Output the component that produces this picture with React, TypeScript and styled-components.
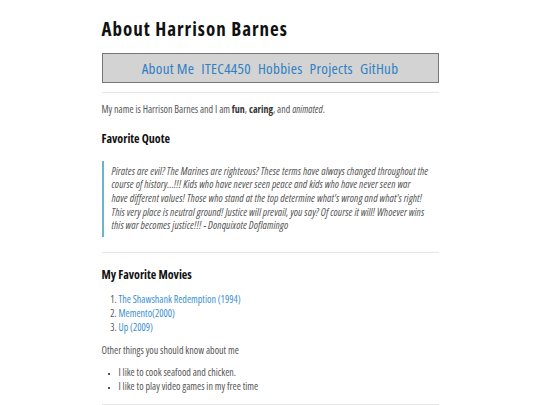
import React from "react";
import styled, { createGlobalStyle } from "styled-components";

const Global = createGlobalStyle`
  html, body { margin: 0; padding: 0; background: #fff; }
  body { font-family: "Open Sans", sans-serif; font-stretch: 75%; color: #555; }
`;

const Page = styled.div`
  width: 337px;
  margin: 0 auto;
  padding-top: 16px;
`;

const Title = styled.h1`
  margin: 0;
  font-size: 19px;
  letter-spacing: 1px;
  line-height: 26px;
  font-weight: bold;
  color: #111;
`;

const Nav = styled.nav`
  margin-top: 11px;
  height: 28px;
  border: 1px solid #777;
  background: #d3d3d3;
  display: flex;
  justify-content: center;
  align-items: center;
  gap: 7px;
`;

const NavLink = styled.a`
  color: #2f80c4;
  font-size: 15px;
  letter-spacing: 0.3px;
  text-decoration: none;
`;

const Rule = styled.hr<{ $top: number }>`
  margin: ${(p) => p.$top}px 0 0;
  border: 0;
  border-top: 1px solid #e6e6e6;
`;

const Para = styled.p<{ $top: number }>`
  margin: ${(p) => p.$top}px 0 0;
  font-size: 10px;
  line-height: 13.6px;
  color: #555;
  b { color: #333; }
`;

const SubHead = styled.h3<{ $top: number }>`
  margin: ${(p) => p.$top}px 0 0;
  font-size: 12px;
  line-height: 16px;
  font-weight: bold;
  color: #111;
`;

const Quote = styled.blockquote`
  margin: 14px 0 0;
  border-left: 2px solid #6cb4c8;
  padding: 4px 0 4px 8px;
  font-style: italic;
  font-size: 10.5px;
  letter-spacing: 0.08px;
  line-height: 13.7px;
  color: #555;
`;

const OList = styled.ol`
  margin: 10px 0 0;
  padding-left: 17px;
  font-size: 10px;
  line-height: 13.9px;
  color: #555;
`;

const UList = styled.ul`
  margin: 9px 0 0;
  padding-left: 17px;
  font-size: 10px;
  line-height: 13.6px;
  color: #555;
  list-style: square;
  li::marker { font-size: 7px; color: #555; }
`;

const MovieLink = styled.a`
  color: #3a8fd0;
  text-decoration: none;
`;

export default function App() {
  return (
    <>
      <Global />
      <Page>
        <Title>About Harrison Barnes</Title>
        <Nav>
          <NavLink href="#">About Me</NavLink>
          <NavLink href="#">ITEC4450</NavLink>
          <NavLink href="#">Hobbies</NavLink>
          <NavLink href="#">Projects</NavLink>
          <NavLink href="#">GitHub</NavLink>
        </Nav>
        <Rule $top={9} />
        <Para $top={10}>
          My name is Harrison Barnes and I am <b>fun</b>, <b>caring</b>, and <i>animated</i>.
        </Para>
        <SubHead $top={14}>Favorite Quote</SubHead>
        <Quote>
          Pirates are evil? The Marines are righteous? These terms have always changed throughout the
          <br />
          course of history...!!! Kids who have never seen peace and kids who have never seen war
          <br />
          have different values! Those who stand at the top determine what's wrong and what's right!
          <br />
          This very place is neutral ground! Justice will prevail, you say? Of course it will! Whoever wins
          <br />
          this war becomes justice!!! - Donquixote Doflamingo
        </Quote>
        <Rule $top={15} />
        <SubHead $top={14}>My Favorite Movies</SubHead>
        <OList>
          <li><MovieLink href="#">The Shawshank Redemption (1994)</MovieLink></li>
          <li><MovieLink href="#">Memento(2000)</MovieLink></li>
          <li><MovieLink href="#">Up (2009)</MovieLink></li>
        </OList>
        <Para $top={9}>Other things you should know about me</Para>
        <UList>
          <li>I like to cook seafood and chicken.</li>
          <li>I like to play video games in my free time</li>
        </UList>
        <Rule $top={10} />
      </Page>
    </>
  );
}
